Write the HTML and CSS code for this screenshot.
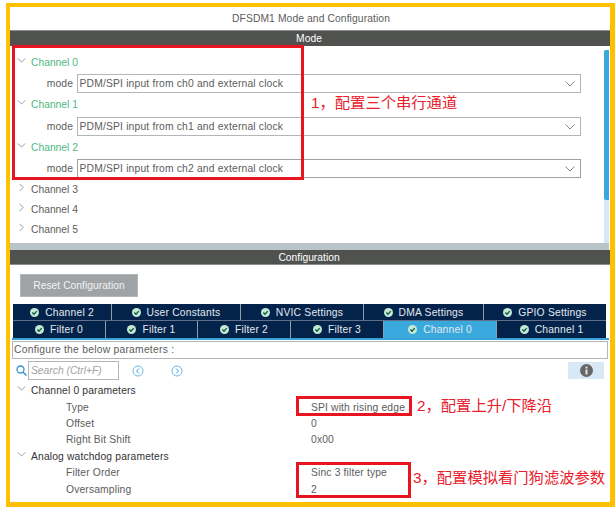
FILE: index.html
```html
<!DOCTYPE html>
<html lang="en">
<head>
<meta charset="utf-8">
<title>DFSDM1 Mode and Configuration</title>
<link rel="stylesheet" href="styles.css">
</head>
<body>
<svg class="defs" width="0" height="0" aria-hidden="true">
  <symbol id="down" viewBox="0 0 10 6"><path d="M.5.5 5 5 9.500.5" fill="none" stroke="currentColor" stroke-width="1"/></symbol>
  <symbol id="right" viewBox="0 0 6 10"><path d="M.5.500 5 5 .5 9.500" fill="none" stroke="currentColor" stroke-width="1"/></symbol>
  <symbol id="ok" viewBox="0 0 10 10"><circle cx="5" cy="5" r="5" fill="#c4e8d2"/><path d="M2.600 5.100 4.400 6.900 7.500 3.500" fill="none" stroke="#0a5c4a" stroke-width="1.500"/></symbol>
</svg>
<main class="frame">
  <h1 class="title">DFSDM1 Mode and Configuration</h1>
  <h2 class="bar">Mode</h2>
  <section class="mode-panel">
    <div class="mode-list">
      <div class="head open green"><svg class="tw-d"><use href="#down"/></svg>Channel 0</div>
      <div class="mode-row"><label class="mode-label">mode</label><div class="select">PDM/SPI input from ch0 and external clock<svg class="sel-arrow"><use href="#down"/></svg></div></div>
      <div class="head open green"><svg class="tw-d"><use href="#down"/></svg>Channel 1</div>
      <div class="mode-row"><label class="mode-label">mode</label><div class="select">PDM/SPI input from ch1 and external clock<svg class="sel-arrow"><use href="#down"/></svg></div></div>
      <div class="head open green"><svg class="tw-d"><use href="#down"/></svg>Channel 2</div>
      <div class="mode-row"><label class="mode-label">mode</label><div class="select dark">PDM/SPI input from ch2 and external clock<svg class="sel-arrow"><use href="#down"/></svg></div></div>
      <div class="closed-list">
        <div class="head"><svg class="tw-r"><use href="#right"/></svg>Channel 3</div>
        <div class="head"><svg class="tw-r"><use href="#right"/></svg>Channel 4</div>
        <div class="head"><svg class="tw-r"><use href="#right"/></svg>Channel 5</div>
      </div>
    </div>
    <div class="scroll"><div class="thumb"></div></div>
  </section>
  <div class="strip"></div>
  <h2 class="bar bar-config">Configuration</h2>
  <section class="config">
    <button class="reset">Reset Configuration</button>
    <div class="tabs tabs-a">
      <div class="tab"><svg class="ok"><use href="#ok"/></svg>Channel 2</div>
      <div class="tab"><svg class="ok"><use href="#ok"/></svg>User Constants</div>
      <div class="tab"><svg class="ok"><use href="#ok"/></svg>NVIC Settings</div>
      <div class="tab"><svg class="ok"><use href="#ok"/></svg>DMA Settings</div>
      <div class="tab"><svg class="ok"><use href="#ok"/></svg>GPIO Settings</div>
    </div>
    <div class="tabs tabs-b">
      <div class="tab"><svg class="ok"><use href="#ok"/></svg>Filter 0</div>
      <div class="tab"><svg class="ok"><use href="#ok"/></svg>Filter 1</div>
      <div class="tab"><svg class="ok"><use href="#ok"/></svg>Filter 2</div>
      <div class="tab"><svg class="ok"><use href="#ok"/></svg>Filter 3</div>
      <div class="tab active"><svg class="ok"><use href="#ok"/></svg>Channel 0</div>
      <div class="tab"><svg class="ok"><use href="#ok"/></svg>Channel 1</div>
    </div>
    <div class="tab-line"></div>
    <div class="configure">Configure the below parameters :</div>
    <div class="toolbar">
      <svg class="search-ico" viewBox="0 0 11 11"><circle cx="4.500" cy="4.500" r="3.500" fill="none" stroke="#2f94cf" stroke-width="1.300"/><path d="M7 7 10.500 10.500" stroke="#2f94cf" stroke-width="1.500"/></svg>
      <div class="search">Search (Ctrl+F)</div>
      <svg class="nav nav-prev" viewBox="0 0 12 12"><circle cx="6" cy="6" r="5" fill="none" stroke="#6cb9e2"/><path d="M7 3.500 4.500 6 7 8.500" fill="none" stroke="#3a9ed6"/></svg>
      <svg class="nav nav-next" viewBox="0 0 12 12"><circle cx="6" cy="6" r="5" fill="none" stroke="#6cb9e2"/><path d="M5 3.500 7.500 6 5 8.500" fill="none" stroke="#3a9ed6"/></svg>
      <div class="info"><svg class="info-ico" viewBox="0 0 13 13"><circle cx="6.500" cy="6.500" r="6.500" fill="#666"/><rect x="5.500" y="5.500" width="2" height="5" fill="#d8e8f6"/><rect x="5.500" y="2.600" width="2" height="1.900" fill="#d8e8f6"/></svg></div>
    </div>
    <div class="params">
      <div class="group"><svg class="tw-d"><use href="#down"/></svg>Channel 0 parameters</div>
      <div class="param"><span class="p-name">Type</span><span class="p-val">SPI with rising edge</span></div>
      <div class="param"><span class="p-name">Offset</span><span class="p-val">0</span></div>
      <div class="param"><span class="p-name">Right Bit Shift</span><span class="p-val">0x00</span></div>
      <div class="group"><svg class="tw-d"><use href="#down"/></svg>Analog watchdog parameters</div>
      <div class="param"><span class="p-name">Filter Order</span><span class="p-val">Sinc 3 filter type</span></div>
      <div class="param"><span class="p-name">Oversampling</span><span class="p-val">2</span></div>
    </div>
  </section>
  <div class="mark mark-1"></div>
  <div class="mark mark-2"></div>
  <div class="mark mark-3"></div>
  <div class="note note-1">1，配置三个串行通道</div>
  <div class="note note-2">2，配置上升/下降沿</div>
  <div class="note note-3">3，配置模拟看门狗滤波参数</div>
</main>
</body>
</html>
```
FILE: styles.css
```css
* { box-sizing: border-box; }
html, body { margin: 0; padding: 0; background: #fff; }
body { width: 616px; height: 512px; overflow: hidden; font-family: "Liberation Sans", Arial, sans-serif; font-size: 10.3px; color: #5c5c5c; }
.defs { position: absolute; }
.frame { position: relative; width: 609px; height: 504px; margin: 3px 0 0 6px; border: solid #ffc000; border-width: 4px 5px 5px 4px; background: #fff; }
.title { margin: 0; height: 23px; padding-left: 2px; font-size: 10.3px; font-weight: 400; line-height: 23px; text-align: center; letter-spacing: .1px; color: #5c5c5c; }
.bar { margin: 0; height: 16px; padding-right: 2px; font-size: 10.3px; font-weight: 400; line-height: 16px; text-align: center; background: #505250; color: #fff; border-top: 1px solid #8c8e8c; }
.mode-panel { display: flex; height: 197px; }
.mode-list { flex: 1; padding-top: 5px; }
.head { display: flex; align-items: center; padding-left: 7px; font-size: 10.3px; color: #5c5c5c; }
.head.open { height: 23px; padding-bottom: 1px; }
.green { color: #4fb884; }
.tw-d { width: 9px; height: 5px; margin-right: 5px; margin-top: -4px; color: #8a8a8a; }
.tw-r { width: 5px; height: 9px; margin: -3px 7px 0 2px; color: #8a8a8a; }
.mode-row { display: flex; align-items: center; height: 19.500px; }
.mode-label { width: 63px; text-align: right; margin-right: 4px; letter-spacing: .1px; color: #5c5c5c; }
.select { position: relative; width: 504px; height: 19px; padding-left: 1.500px; line-height: 17px; border: 1px solid #b3b6ba; border-width: 1px 1.500px 1.500px 1px; letter-spacing: .18px; color: #5c5c5c; }
.select.dark { border-color: #9ea0a3; }
.sel-arrow { position: absolute; right: 5px; top: 6px; width: 10px; height: 6px; color: #888; }
.closed-list { margin-top: .5px; }
.closed-list .head { height: 20px; }
.scroll { width: 5px; margin: 4px 1px 0 0; background: #d7e7f5; }
.thumb { height: 150px; background: #39a8dc; border-radius: 2px 0 0 2px; }
.strip { height: 7px; background: #b9c4c8; width: 599px; }
.bar-config { height: 15px; line-height: 15px; border-top: 0; border-bottom: 1px solid #8c8e8c; }
.config { padding: 9px 0 0 2px; }
.reset { display: block; width: 118px; height: 23px; margin: 0 0 7px 8px; padding: 0; border: 1px solid #b4b6b8; background: #9fa3a6; color: #f2f2f2; font: 10.3px "Liberation Sans", Arial, sans-serif; letter-spacing: .03px; }
.tabs { display: grid; margin-left: 1px; width: 593px; background: #03234b; }
.tabs-a { height: 16px; grid-template-columns: 98px 129px 123px 120px 123px; }
.tabs-b { height: 18px; grid-template-columns: 92px 92px 93px 93px 113px 110px; border-top: 1px solid #60708a; }
.tab { display: flex; align-items: center; justify-content: center; gap: 4px; color: #e4e8ee; letter-spacing: .2px; border-left: 1px solid #8f9cae; }
.tab:first-child { border-left: 0; }
.ok { width: 9px; height: 9px; margin-right: 2px; }
.tab.active { background: #39a8dc; }
.tab-line { width: 597px; height: 2px; background: #39a0d8; }
.configure { width: 596px; height: 18px; margin-top: 1px; padding-left: 1px; line-height: 16px; border: 1px solid #b3b6ba; border-width: 1px 1.500px 1.500px 1px; letter-spacing: .25px; color: #5c5c5c; }
.toolbar { display: flex; align-items: center; height: 19px; margin-top: 2px; padding-left: 4px; }
.search-ico { width: 11px; height: 11px; }
.search { width: 91px; height: 19px; margin-left: 1px; padding-left: 2px; line-height: 17px; border: 1px solid #b3b6ba; font-style: italic; color: #a2a2a2; }
.nav { width: 12px; height: 12px; }
.nav-prev { margin-left: 13px; }
.nav-next { margin-left: 27px; }
.info { display: flex; align-items: center; justify-content: center; width: 36px; height: 17px; margin-left: 385px; background: #d8e8f6; }
.info-ico { width: 13px; height: 13px; }
.params { padding-top: 2.500px; }
.group { display: flex; align-items: center; height: 16.400px; padding-left: 5px; letter-spacing: .15px; color: #333; }
.param { display: flex; align-items: center; height: 16.400px; letter-spacing: .15px; color: #5c5c5c; }
.p-name { width: 299px; padding-left: 54px; }
.mark { position: absolute; border: 3px solid #e8141f; pointer-events: none; }
.mark-1 { left: 2px; top: 38px; width: 292px; height: 135px; }
.mark-2 { left: 286px; top: 389px; width: 116px; height: 20px; }
.mark-3 { left: 286px; top: 455px; width: 115px; height: 36px; }
.note { position: absolute; font-family: "Liberation Sans", "Noto Sans CJK SC", sans-serif; font-size: 15.3px; line-height: 18px; color: #e8202c; white-space: nowrap; }
.note-1 { left: 301px; top: 87px; }
.note-2 { left: 407px; top: 390px; }
.note-3 { left: 403px; top: 462px; }
```
